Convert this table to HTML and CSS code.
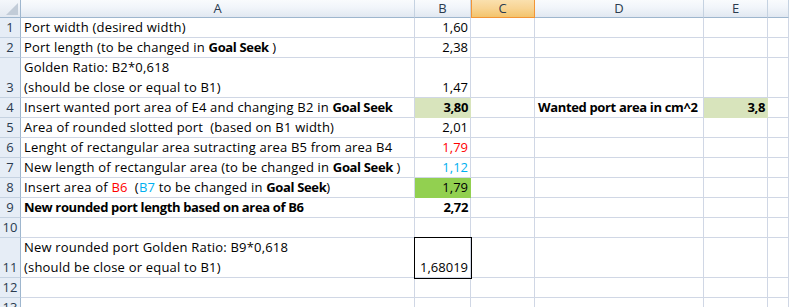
FILE: index.html
```html
<!DOCTYPE html>
<html>
<head>
<meta charset="utf-8">
<link rel="stylesheet" href="styles.css">
</head>
<body>
<div class="sheet">
  <div class="corner"><span class="tri"></span></div>
  <div class="ch">A</div>
  <div class="ch">B</div>
  <div class="ch sel">C</div>
  <div class="ch">D</div>
  <div class="ch">E</div>
  <div class="ch"></div>

  <div class="rh">1</div>
  <div class="c">Port width (desired width)</div>
  <div class="c n">1,60</div>
  <div class="c"></div><div class="c"></div><div class="c"></div><div class="c"></div>

  <div class="rh">2</div>
  <div class="c">Port length (to be changed in&nbsp;<b>Goal Seek</b>&nbsp;)</div>
  <div class="c n">2,38</div>
  <div class="c"></div><div class="c"></div><div class="c"></div><div class="c"></div>

  <div class="rh">3</div>
  <div class="c"><span>Golden Ratio: B2*0,618<br>(should be close or equal to B1)</span></div>
  <div class="c n">1,47</div>
  <div class="c"></div><div class="c"></div><div class="c"></div><div class="c"></div>

  <div class="rh">4</div>
  <div class="c">Insert wanted port area of E4 and changing B2 in&nbsp;<b>Goal Seek</b></div>
  <div class="c n fill-light"><b>3,80</b></div>
  <div class="c"></div>
  <div class="c"><b>Wanted port area in cm^2</b></div>
  <div class="c n fill-light"><b>3,8</b></div>
  <div class="c"></div>

  <div class="rh">5</div>
  <div class="c">Area of rounded slotted port&nbsp; (based on B1 width)</div>
  <div class="c n">2,01</div>
  <div class="c"></div><div class="c"></div><div class="c"></div><div class="c"></div>

  <div class="rh">6</div>
  <div class="c">Lenght of rectangular area sutracting area B5 from area B4</div>
  <div class="c n red">1,79</div>
  <div class="c"></div><div class="c"></div><div class="c"></div><div class="c"></div>

  <div class="rh">7</div>
  <div class="c">New length of rectangular area (to be changed in&nbsp;<b>Goal Seek</b>&nbsp;)</div>
  <div class="c n blue">1,12</div>
  <div class="c"></div><div class="c"></div><div class="c"></div><div class="c"></div>

  <div class="rh">8</div>
  <div class="c">Insert area of&nbsp;<span class="red">B6</span>&nbsp;&nbsp;(<span class="blue">B7</span>&nbsp;to be changed in&nbsp;<b>Goal Seek</b>)</div>
  <div class="c n fill-green">1,79</div>
  <div class="c"></div><div class="c"></div><div class="c"></div><div class="c"></div>

  <div class="rh">9</div>
  <div class="c"><b>New rounded port length based on area of B6</b></div>
  <div class="c n"><b>2,72</b></div>
  <div class="c"></div><div class="c"></div><div class="c"></div><div class="c"></div>

  <div class="rh">10</div>
  <div class="c"></div><div class="c"></div><div class="c"></div><div class="c"></div><div class="c"></div><div class="c"></div>

  <div class="rh">11</div>
  <div class="c"><span>New rounded port Golden Ratio: B9*0,618<br>(should be close or equal to B1)</span></div>
  <div class="c n boxed">1,68019</div>
  <div class="c"></div><div class="c"></div><div class="c"></div><div class="c"></div>

  <div class="rh">12</div>
  <div class="c"></div><div class="c"></div><div class="c"></div><div class="c"></div><div class="c"></div><div class="c"></div>

  <div class="rh">13</div>
  <div class="c"></div><div class="c"></div><div class="c"></div><div class="c"></div><div class="c"></div><div class="c"></div>
</div>
</body>
</html>
```

FILE: styles.css
```css
html, body {
  margin: 0;
  padding: 0;
  background: #ffffff;
  overflow: hidden;
}

.sheet {
  display: grid;
  grid-template-columns: 21px 394px 56px 64px 169px 64px 21px;
  grid-template-rows: 18px 20px 20px 40px 20px 20px 20px 20px 20px 20px 20px 40px 20px 20px;
  font-family: "Open Sans", "Liberation Sans", sans-serif;
  font-size: 13px;
  color: #000;
  width: 789px;
  height: 307px;
  overflow: hidden;
}

.sheet > div {
  box-sizing: border-box;
  border-right: 1px solid #d0d7e5;
  border-bottom: 1px solid #d0d7e5;
  white-space: nowrap;
}

.corner {
  position: relative;
  background: linear-gradient(#f4f7fb, #e3e9f1);
  border-right-color: #9eb6ce !important;
  border-bottom-color: #9eb6ce !important;
}

.corner .tri {
  position: absolute;
  right: 2px;
  bottom: 2px;
  width: 0;
  height: 0;
  border-left: 12px solid transparent;
  border-bottom: 12px solid #c2ccd8;
}

.ch {
  background: linear-gradient(#f9fbfd 0%, #f1f5fa 45%, #e1e8f1 100%);
  border-right-color: #c5d2e1 !important;
  border-bottom-color: #9eb6ce !important;
  color: #2a3b4f;
  text-align: center;
  line-height: 17px;
}

.ch.sel {
  background: linear-gradient(#fae0ae 0%, #f8d493 50%, #f3c46c 100%);
  border-right-color: #f29536 !important;
  border-bottom-color: #f29536 !important;
  box-shadow: inset 1px 0 0 #f29536;
}

.rh {
  background: #e6edf6;
  border-right-color: #9eb6ce !important;
  border-bottom-color: #c5d2e1 !important;
  color: #2a3b4f;
  display: flex;
  align-items: flex-end;
  justify-content: center;
  line-height: 20px;
  overflow: hidden;
}

.c {
  display: flex;
  align-items: flex-end;
  padding: 0 2px 0 3px;
  line-height: 20px;
  letter-spacing: 0.2px;
}

.c.n {
  justify-content: flex-end;
  letter-spacing: 0;
}

b {
  font-weight: bold;
  letter-spacing: -0.35px;
}

.red {
  color: #ff0000;
}

.blue {
  color: #00b0f0;
}

.fill-light {
  background: #d8e4bc;
  border-color: #d8e4bc !important;
}

.fill-green {
  background: #92d050;
  border-color: #92d050 !important;
}

.boxed {
  position: relative;
  z-index: 1;
  outline: 1px solid #000000;
}
```
